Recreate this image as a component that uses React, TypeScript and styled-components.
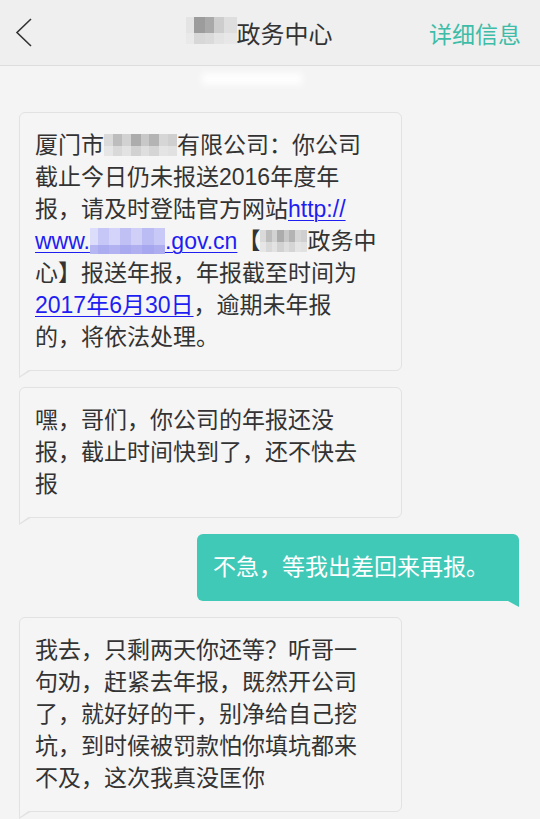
import React from "react";
import styled, { createGlobalStyle, css } from "styled-components";

const GlobalStyle = createGlobalStyle`
  html, body { margin: 0; padding: 0; }
  body {
    background: #f4f4f4;
    font-family: "Liberation Sans", "Noto Sans CJK SC", sans-serif;
    -webkit-font-smoothing: antialiased;
  }
`;

const Page = styled.div`
  width: 540px;
  min-height: 819px;
  background: #f4f4f4;
  overflow: hidden;
`;

const Header = styled.header`
  height: 65px;
  display: grid;
  grid-template-columns: 1fr auto 1fr;
  align-items: center;
  background: #efefef;
  border-bottom: 1px solid #dddddd;
`;

const BackButton = styled.div`
  display: flex;
  align-items: center;
  padding-left: 15px;
  height: 100%;
`;

const Title = styled.div`
  display: flex;
  align-items: center;
  font-size: 24px;
  color: #333;
  padding-right: 22px;
`;

const Action = styled.div`
  justify-self: end;
  padding-right: 19px;
  font-size: 23px;
  color: #3dbda8;
`;

const TimeRow = styled.div`
  height: 46px;
  display: flex;
  justify-content: center;
  padding-right: 36px;
  padding-top: 7px;
  box-sizing: border-box;
`;

const TimeBlur = styled.div`
  width: 100px;
  height: 12px;
  background: #ffffff;
  filter: blur(3px);
  opacity: 0.9;
`;

const Messages = styled.div`
  display: flex;
  flex-direction: column;
  gap: 16px;
  padding: 0 21px 20px 19px;
`;

const Bubble = styled.div<{ $mine?: boolean }>`
  position: relative;
  box-sizing: border-box;
  font-size: 23px;
  line-height: 32px;
  white-space: nowrap;
  ${({ $mine }) =>
    $mine
      ? css`
          align-self: flex-end;
          width: 322px;
          padding: 17px 16px 18px 16px;
          background: #41c9b8;
          color: #ffffff;
          border-radius: 6px 6px 0 6px;
          &::after {
            content: "";
            position: absolute;
            right: 0;
            bottom: -6px;
            width: 11px;
            height: 6px;
            background: #41c9b8;
            clip-path: polygon(0 0, 100% 0, 100% 100%);
          }
        `
      : css`
          align-self: flex-start;
          width: 383px;
          padding: 16px 15px 17px 15px;
          background: #f5f5f5;
          color: #333333;
          border: 1px solid #e2e2e2;
          border-radius: 6px 6px 6px 0;
          &::before {
            content: "";
            position: absolute;
            left: -1px;
            bottom: -8px;
            width: 13px;
            height: 8px;
            background: #e2e2e2;
            clip-path: polygon(0 0, 100% 0, 0 100%);
          }
          &::after {
            content: "";
            position: absolute;
            left: 0;
            bottom: -6px;
            width: 10px;
            height: 7px;
            background: #f5f5f5;
            clip-path: polygon(0 0, 100% 0, 0 100%);
          }
        `}
`;

const Line = styled.div``;

const Link = styled.span`
  color: #1e1ef2;
  text-decoration: underline;
  text-decoration-thickness: 1px;
  text-underline-offset: 3px;
`;

const mosaicGray = css`
  background:
    linear-gradient(180deg, rgba(255, 255, 255, 0) 0 55%, rgba(240, 240, 240, 0.55) 55% 100%),
    linear-gradient(
      90deg,
      #dadada 0 12%,
      #bdbdbd 12% 25%,
      #d2d2d2 25% 37%,
      #acacac 37% 50%,
      #c8c8c8 50% 62%,
      #b4b4b4 62% 75%,
      #d6d6d6 75% 87%,
      #cfcfcf 87% 100%
    );
`;

const mosaicDark = css`
  background:
    linear-gradient(180deg, rgba(255, 255, 255, 0) 0 60%, rgba(235, 235, 235, 0.75) 60% 100%),
    linear-gradient(
      90deg,
      #e4e4e4 0 15%,
      #9c9c9c 15% 38%,
      #a9a9a9 38% 55%,
      #cdcdcd 55% 75%,
      #dedede 75% 100%
    );
`;

const mosaicBlue = css`
  background:
    linear-gradient(180deg, rgba(255, 255, 255, 0) 0 65%, rgba(150, 150, 235, 0.55) 65% 100%),
    linear-gradient(
      90deg,
      #dcdcfb 0 10%,
      #c6c6f7 10% 25%,
      #d4d4fa 25% 40%,
      #c0c0f5 40% 55%,
      #cfcff8 55% 70%,
      #bcbcf4 70% 85%,
      #c9c9f7 85% 100%
    );
`;

const Mosaic = styled.span<{ $w: number; $h: number; $tone: "gray" | "dark" | "blue" }>`
  display: inline-block;
  vertical-align: middle;
  width: ${({ $w }) => $w}px;
  height: ${({ $h }) => $h}px;
  margin-top: -4px;
  ${({ $tone }) => ($tone === "blue" ? mosaicBlue : $tone === "dark" ? mosaicDark : mosaicGray)}
`;

export default function App() {
  return (
    <Page>
      <GlobalStyle />
      <Header>
        <BackButton>
          <svg width="18" height="30" viewBox="0 0 18 30">
            <polyline points="16,1 2,14.5 16,28" fill="none" stroke="#333" strokeWidth="1.6" />
          </svg>
        </BackButton>
        <Title>
          <Mosaic $w={51} $h={27} $tone="dark" />
          政务中心
        </Title>
        <Action>详细信息</Action>
      </Header>
      <TimeRow>
        <TimeBlur />
      </TimeRow>
      <Messages>
        <Bubble>
          <Line>
            厦门市<Mosaic $w={73} $h={22} $tone="gray" />有限公司：你公司
          </Line>
          <Line>截止今日仍未报送2016年度年</Line>
          <Line>
            报，请及时登陆官方网站<Link>http://</Link>
          </Line>
          <Line>
            <Link>
              www.<Mosaic $w={75} $h={26} $tone="blue" />.gov.cn
            </Link>
            【<Mosaic $w={47} $h={22} $tone="gray" />政务中
          </Line>
          <Line>心】报送年报，年报截至时间为</Line>
          <Line>
            <Link>2017年6月30日</Link>，逾期未年报
          </Line>
          <Line>的，将依法处理。</Line>
        </Bubble>
        <Bubble>
          <Line>嘿，哥们，你公司的年报还没</Line>
          <Line>报，截止时间快到了，还不快去</Line>
          <Line>报</Line>
        </Bubble>
        <Bubble $mine>
          <Line>不急，等我出差回来再报。</Line>
        </Bubble>
        <Bubble>
          <Line>我去，只剩两天你还等？听哥一</Line>
          <Line>句劝，赶紧去年报，既然开公司</Line>
          <Line>了，就好好的干，别净给自己挖</Line>
          <Line>坑，到时候被罚款怕你填坑都来</Line>
          <Line>不及，这次我真没匡你</Line>
        </Bubble>
      </Messages>
    </Page>
  );
}
